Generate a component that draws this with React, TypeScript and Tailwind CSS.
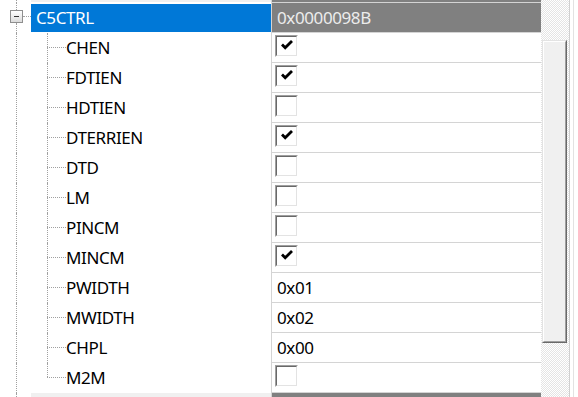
import React from "react";

type Field = { name: string; check?: boolean; value?: string };

const fields: Field[] = [
  { name: "CHEN", check: true },
  { name: "FDTIEN", check: true },
  { name: "HDTIEN", check: false },
  { name: "DTERRIEN", check: true },
  { name: "DTD", check: false },
  { name: "LM", check: false },
  { name: "PINCM", check: false },
  { name: "MINCM", check: true },
  { name: "PWIDTH", value: "0x01" },
  { name: "MWIDTH", value: "0x02" },
  { name: "CHPL", value: "0x00" },
  { name: "M2M", check: false },
];

const Checkbox = ({ checked }: { checked: boolean }) => (
  <div className="ml-[3px] mt-[2px] h-[22px] w-[23px] border-t border-l border-[#a0a0a0] border-r border-b border-r-white border-b-white">
    <div className="h-full w-full border-t border-l border-[#696969] border-r border-b border-r-[#e3e3e3] border-b-[#e3e3e3] bg-white pl-[4px] pt-[3px]">
      {checked && (
        <svg width="12" height="10" viewBox="0 0 12 10">
          <path d="M1 4.6 L4.2 7.8 L11 1" fill="none" stroke="#000" strokeWidth="2.8" />
        </svg>
      )}
    </div>
  </div>
);

const FieldRow = ({ f, last }: { f: Field; last: boolean }) => (
  <div className="flex h-[30px] shrink-0">
    <div className="flex h-full w-[271px]">
      <div className="w-[16px]" />
      <div className="h-full w-[31px] border-l border-dotted border-[#a0a0a0]" />
      <div className="flex h-full w-[19px] flex-col">
        <div className="h-[14px] border-l border-dotted border-[#a0a0a0]" />
        <div
          className={
            last
              ? "h-px border-t border-dotted border-[#a0a0a0]"
              : "flex-1 border-t border-l border-dotted border-[#a0a0a0]"
          }
        />
      </div>
      <div className="flex items-center text-[17px] tracking-[-0.4px] text-black">{f.name}</div>
    </div>
    <div className="h-full w-[270px] border-l border-b border-[#d4d4d4] bg-white">
      {f.value !== undefined ? (
        <div className="flex h-full items-center pl-[5px] text-[17px] tracking-[-0.4px] text-black">{f.value}</div>
      ) : (
        <Checkbox checked={!!f.check} />
      )}
    </div>
  </div>
);

export default function App() {
  return (
    <div className="flex h-[397px] w-[578px] overflow-hidden bg-white font-['Noto_Sans',sans-serif]">
      <div className="flex w-[541px] flex-col">
        {/* previous register, mostly scrolled away */}
        <div className="flex h-[3px] shrink-0">
          <div className="flex w-[271px]">
            <div className="w-[16px]" />
            <div className="w-[15px] border-l border-dotted border-[#a0a0a0]" />
            <div className="h-[2px] flex-1 bg-[#f0f0f0]" />
          </div>
          <div className="w-[270px] border-l border-b border-[#d4d4d4] bg-[#808080]" />
        </div>

        {/* C5CTRL */}
        <div className="flex h-[30px] shrink-0">
          <div className="flex h-full w-[271px]">
            <div className="w-[10px]" />
            <div className="flex h-full w-[13px] flex-col">
              <div className="ml-[6px] h-[7px] border-l border-dotted border-[#a0a0a0]" />
              <div className="flex h-[13px] items-center justify-center border border-[#8f8f8f] bg-gradient-to-b from-white to-[#dcdcdc]">
                <div className="h-px w-[5px] bg-[#333]" />
              </div>
              <div className="ml-[6px] flex-1 border-l border-dotted border-[#a0a0a0]" />
            </div>
            <div className="w-[8px] pt-[13px]">
              <div className="border-t border-dotted border-[#a0a0a0]" />
            </div>
            <div className="mt-px flex h-[28px] flex-1 items-center bg-[#0078d7] pl-[5px] text-[17px] tracking-[-0.4px] text-white">
              C5CTRL
            </div>
          </div>
          <div className="flex h-full w-[270px] items-center border-l border-b border-[#d4d4d4] bg-[#808080] pl-[5px] text-[17px] tracking-[-0.4px] text-[#ececec]">
            0x0000098B
          </div>
        </div>

        {fields.map((f, i) => (
          <FieldRow key={f.name} f={f} last={i === fields.length - 1} />
        ))}

        {/* next register */}
        <div className="flex h-[8px] shrink-0">
          <div className="flex w-[271px]">
            <div className="w-[16px]" />
            <div className="w-[15px] border-l border-dotted border-[#a0a0a0]" />
            <div className="flex-1 bg-[#f0f0f0]" />
          </div>
          <div className="w-[270px] border-l border-[#d4d4d4] bg-[#808080]" />
        </div>
      </div>

      {/* vertical scrollbar */}
      <div className="h-full w-[28px] bg-[image:repeating-conic-gradient(#ffffff_0_25%,#e4e4e4_0_50%)] bg-size-[2px_2px] pl-px pt-[40px]">
        <div className="h-[303px] w-[25px] border-t border-l border-[#e3e3e3] border-r border-b border-r-[#696969] border-b-[#696969]">
          <div className="h-full w-full border-t border-l border-white border-r border-b border-r-[#a0a0a0] border-b-[#a0a0a0] bg-[#f0f0f0]" />
        </div>
      </div>
      <div className="flex h-full flex-1">
        <div className="w-[2px] border-l border-[#cfcfcf]" />
        <div className="w-[2px]" />
        <div className="w-[2px] border-l border-[#e2e2e2]" />
      </div>
    </div>
  );
}
